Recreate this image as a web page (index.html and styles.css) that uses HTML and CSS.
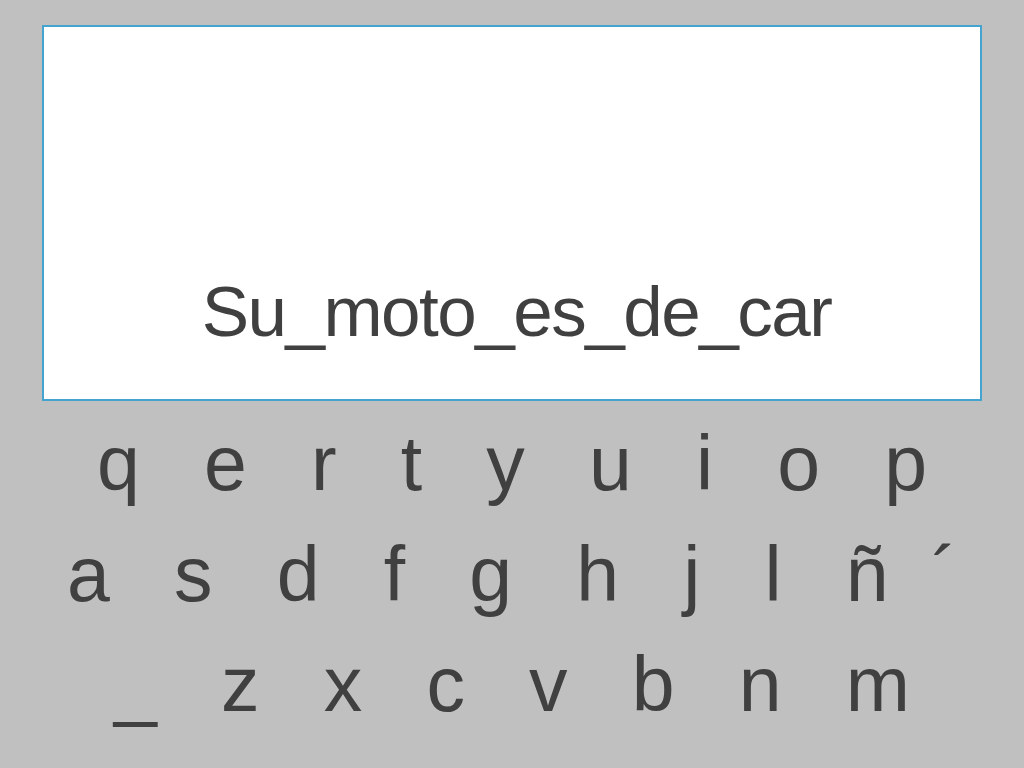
FILE: index.html
```html
<!DOCTYPE html>
<html lang="es">
<head>
<meta charset="utf-8">
<title>Teclado</title>
<link rel="stylesheet" href="styles.css">
</head>
<body>
<div class="slide">
  <div class="display">
    <div class="typed">Su_moto_es_de_car</div>
  </div>
  <div class="keyboard">
    <div class="row">q   e   r   t   y   u   i   o   p</div>
    <div class="row">a   s   d   f   g   h   j   l   ñ  ´</div>
    <div class="row">_   z   x   c   v   b   n   m</div>
  </div>
</div>
</body>
</html>
```
FILE: styles.css
```css
html, body {
  margin: 0;
  padding: 0;
}
body {
  background: #c0c0c0;
  width: 1024px;
  height: 768px;
  overflow: hidden;
  font-family: "Liberation Sans", Arial, sans-serif;
  color: #404040;
}
.slide {
  display: flex;
  flex-direction: column;
  padding-top: 25px;
}
.display {
  margin-left: 42px;
  width: 936px;
  height: 372px;
  border: 2px solid #45a3d0;
  background: #ffffff;
  display: flex;
  flex-direction: column;
  justify-content: flex-end;
}
.typed {
  font-size: 71px;
  line-height: 80px;
  letter-spacing: -1.5px;
  text-align: center;
  padding-left: 9px;
  margin-bottom: 47px;
  white-space: pre;
}
.keyboard {
  margin-top: 7px;
  display: flex;
  flex-direction: column;
}
.row {
  font-size: 77px;
  line-height: 111px;
  height: 110.5px;
  text-align: center;
  white-space: pre;
}
```
